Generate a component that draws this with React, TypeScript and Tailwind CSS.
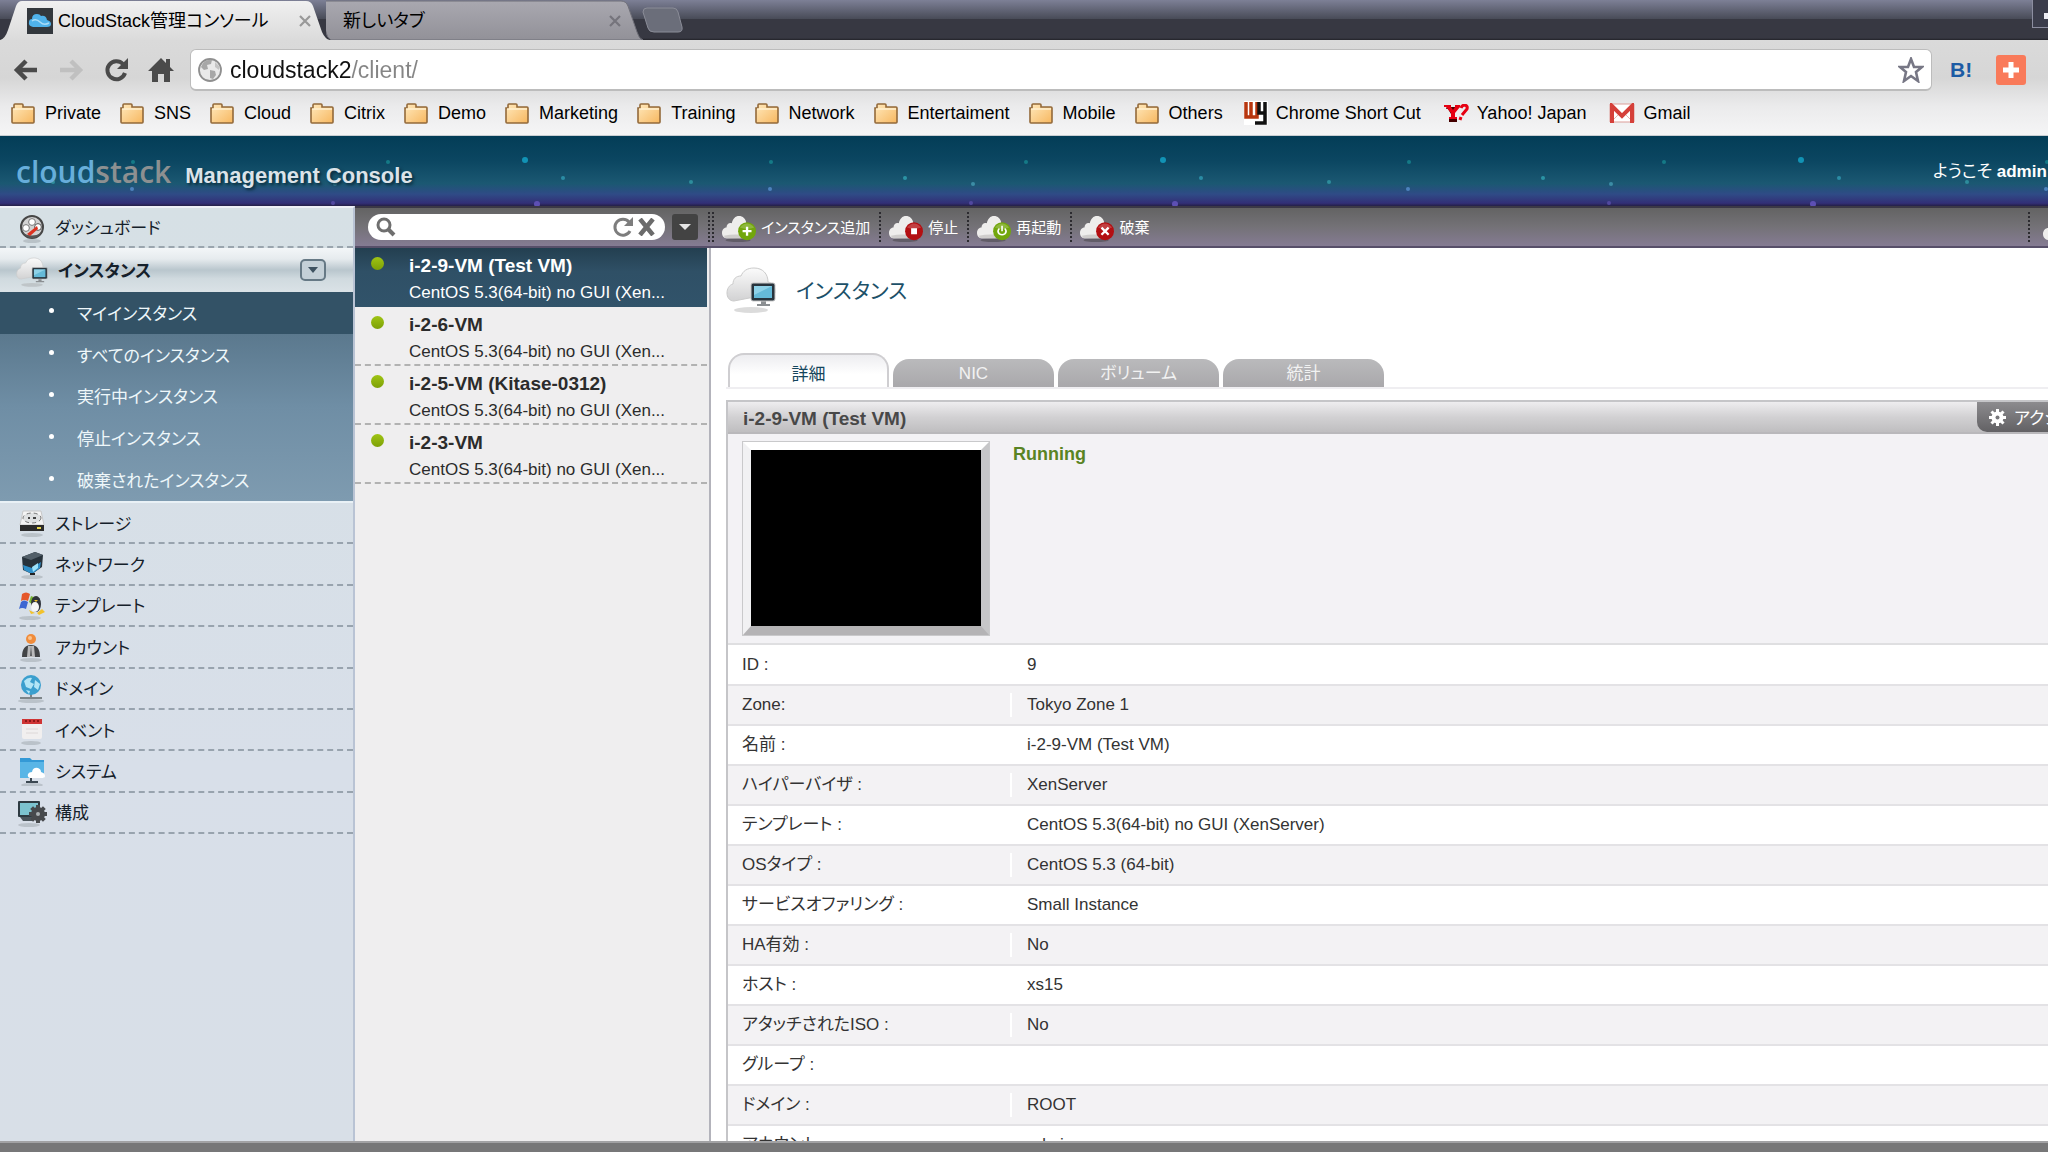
import { useState, type ReactNode } from "react";

const BOOKMARKS = [
  "Private", "SNS", "Cloud", "Citrix", "Demo", "Marketing", "Training",
  "Network", "Entertaiment", "Mobile", "Others",
];

const SUB_ITEMS = [
  "マイインスタンス",
  "すべてのインスタンス",
  "実行中インスタンス",
  "停止インスタンス",
  "破棄されたインスタンス",
];

const INSTANCES = [
  "i-2-9-VM (Test VM)",
  "i-2-6-VM",
  "i-2-5-VM (Kitase-0312)",
  "i-2-3-VM",
];

const TABS = ["詳細", "NIC", "ボリューム", "統計"];

const DETAILS = [
  { label: "ID :",                value: "9" },
  { label: "Zone:",               value: "Tokyo Zone 1" },
  { label: "名前 :",              value: "i-2-9-VM (Test VM)" },
  { label: "ハイパーバイザ :",    value: "XenServer" },
  { label: "テンプレート :",      value: "CentOS 5.3(64-bit) no GUI (XenServer)" },
  { label: "OSタイプ :",          value: "CentOS 5.3 (64-bit)" },
  { label: "サービスオファリング :", value: "Small Instance" },
  { label: "HA有効 :",            value: "No" },
  { label: "ホスト :",            value: "xs15" },
  { label: "アタッチされたISO :", value: "No" },
  { label: "グループ :",          value: "" },
  { label: "ドメイン :",          value: "ROOT" },
  { label: "アカウント :",        value: "admin" },
];

// x, y, radius, colour inside one 638px tile of the banner
const STARS: [number, number, number, string][] = [
  [525, 24, 3, "#1193b5"], [563, 42, 2, "#2a8ca5"], [53, 46, 2, "#2d8d9c"],
  [133, 26, 2, "#147a86"], [132, 53, 2, "#4d82bd"], [267, 42, 2, "#2a93a5"],
  [335, 48, 2, "#3b8da5"], [333, 67, 2, "#5148a0"], [388, 26, 2, "#147a86"],
  [537, 68, 3, "#5d4fb4"],
];

const CLOUD = "M6 26c-4 0-6-3-6-6 0-4 3-6 5-6 0-4 3-6 6-5 1-5 4-8 8-8s8 3 8 8c4 0 7 3 7 8 0 6-3 9-7 9z";

function FolderIcon() {
  return (
    <svg width="24" height="21" viewBox="0 0 24 21">
      <defs>
        <linearGradient id="folder" x1="0" y1="0" x2="1" y2="1">
          <stop offset="0" stopColor="#ffe9bd" />
          <stop offset="1" stopColor="#f7b75f" />
        </linearGradient>
      </defs>
      <path d="M1 19V5h2V2q0-1 1-1h7q1 0 1 1v2h10q1 0 1 1v14q0 1-1 1H2q-1 0-1-1z"
        fill="url(#folder)" stroke="#93693a" strokeWidth="1.6" />
      <path d="M2 6h20" stroke="#fff2d4" strokeWidth="1.4" />
    </svg>
  );
}

function Shadow({ cx = 12, cy = 25, rx = 11 }: { cx?: number; cy?: number; rx?: number }) {
  return <ellipse cx={cx} cy={cy} rx={rx} ry="2" fill="#8e979c" opacity=".4" />;
}

function InstanceIcon({ width, height }: { width: number; height: number }) {
  return (
    <svg width={width} height={height} viewBox="0 0 50 46">
      <defs>
        <linearGradient id="cloudBody" x1="0" y1="0" x2="0" y2="1">
          <stop offset="0" stopColor="#fbfbfb" />
          <stop offset="1" stopColor="#d2d2d3" />
        </linearGradient>
      </defs>
      <ellipse cx="25" cy="43" rx="17" ry="3" fill="#999" opacity=".35" />
      <path d="M8 34c-5 0-7-4-7-8s2-8 6-9c0-5 3-8 8-8 2-5 6-8 13-8 9 0 14 6 14 14 5 1 7 5 7 9v2z"
        fill="url(#cloudBody)" stroke="#cbcbcb" strokeWidth="1" />
      <path d="M35 33h5v4h4v2H31v-2h4z" fill="#8b8f92" />
      <rect x="25" y="16" width="24" height="18" rx="2" fill="#28343d" stroke="#c9c9c9" strokeWidth="1" />
      <rect x="28" y="19" width="18" height="12" fill="#65bad8" />
      <path d="M28 19h18l-18 9z" fill="#8fd2e8" />
    </svg>
  );
}

const DashboardIcon = (
  <svg width="28" height="28" viewBox="0 0 28 28">
    <Shadow cx={14} cy={26} rx={9} />
    <circle cx="14" cy="12" r="11" fill="#d2d2d2" stroke="#464646" strokeWidth="2" />
    <circle cx="8" cy="13" r="3.4" fill="#fff" stroke="#777" />
    <circle cx="14" cy="7" r="3.4" fill="#fff" stroke="#777" />
    <circle cx="20" cy="12" r="3.4" fill="#fff" stroke="#555" />
    <path d="M5 18q9 5 18 0-3 5-9 5t-9-5z" fill="#555" />
    <path d="M9 19l10-8 1 3-8 7z" fill="#dc3220" />
  </svg>
);

const StorageIcon = (
  <svg width="28" height="28" viewBox="0 0 28 28">
    <Shadow cx={14} />
    <path d="M5 1h18l3 14H2z" fill="#f4f4f4" stroke="#c8c8c8" />
    <ellipse cx="14" cy="8" rx="9" ry="5" fill="#dfe1e2" stroke="#777" strokeDasharray="4 3" />
    <path d="M10 8h2m3 0h3" stroke="#444" strokeWidth="2" />
    <rect x="2" y="15" width="24" height="6" fill="#2b2b2b" />
    <path d="M19 18h4" stroke="#e7d64e" strokeWidth="2" />
  </svg>
);

const NetworkIcon = (
  <svg width="28" height="28" viewBox="0 0 28 28">
    <Shadow cx={14} cy={26} />
    <path d="M4 6l13-5 8 3-1 12-10 7-9-4z" fill="#27323b" />
    <path d="M4 6l13-5 8 3-12 5z" fill="#525f69" />
    <path d="M5 14l9 3 9-6-1 6-8 6-8-4z" fill="#2f8fc9" />
    <path d="M14 16l6-4v5l-5 4z" fill="#9be2fb" />
    <path d="M12 22h5v2h-5z" fill="#222" />
  </svg>
);

const TemplateIcon = (
  <svg width="28" height="28" viewBox="0 0 28 28">
    <Shadow cx={12} cy={26} />
    <path d="M4 2q4-3 8 0l-2 7q-4-2-7 0z" fill="#e5572a" />
    <path d="M13 4q4 2 6 0l-2 7q-3 2-6-1z" fill="#77b532" />
    <path d="M3 10q3-3 7 0l-2 7q-4-2-7 0z" fill="#3d66d2" />
    <ellipse cx="18" cy="12" rx="5" ry="8" fill="#30343a" />
    <ellipse cx="17" cy="15" rx="4" ry="5" fill="#f6f6f6" />
    <path d="M11 18l6 3-4 1zM19 21l5-4 3 3-6 3z" fill="#f2c22b" />
    <path d="M16 8h4l-2 2z" fill="#f2c22b" />
  </svg>
);

const AccountIcon = (
  <svg width="28" height="28" viewBox="0 0 28 28">
    <Shadow cx={13} cy={26} />
    <circle cx="13" cy="5" r="5" fill="#f08c3b" />
    <circle cx="12" cy="4" r="2" fill="#fbc38c" />
    <path d="M4 23q0-12 9-12t9 12z" fill="#424446" />
    <path d="M10 12h6l1 11H9z" fill="#b9b9ba" />
    <path d="M13 12l1 10h-2z" fill="#56585a" />
  </svg>
);

const DomainIcon = (
  <svg width="28" height="28" viewBox="0 0 28 28">
    <Shadow cx={13} cy={26} rx={13} />
    <path d="M13 18v6M2 23h22" stroke="#7d8589" strokeWidth="2" />
    <circle cx="13" cy="10" r="10" fill="#3b9fce" />
    <path d="M6 6q4-4 8-3l-2 4 4 2-3 5-5-2zM17 5l5 4-2 6-4-3zM8 15l4 1-1 3z" fill="#b2e5f6" />
  </svg>
);

const EventIcon = (
  <svg width="28" height="28" viewBox="0 0 28 28">
    <Shadow cx={13} cy={26} rx={10} />
    <path d="M4 4h20v16q0 2-2 2H6q-2 0-2-2z" fill="#f1efef" />
    <path d="M4 2h20v5H4z" fill="#cf3434" />
    <path d="M8 3v2m4-2v2m4-2v2m4-2v2" stroke="#8d1717" strokeWidth="2" />
    <path d="M8 12h12M8 16h12" stroke="#ddd8d8" strokeWidth="1" />
  </svg>
);

const SystemIcon = (
  <svg width="28" height="28" viewBox="0 0 28 28">
    <Shadow cx={14} cy={27} />
    <path d="M2 0h10l2 2h12v18H2z" fill="#3499d6" />
    <path d="M2 4h24v16H2z" fill="#59b5e6" />
    <path d="M12 20q-3-1-2-4 1-2 4-2 1-5 6-4 3 1 3 4 4 1 4 4 0 2-3 2z" fill="#fff" />
    <path d="M13 20v4M8 24h12" stroke="#3c4852" strokeWidth="2" />
  </svg>
);

const ConfigIcon = (
  <svg width="30" height="28" viewBox="0 0 30 28">
    <Shadow cx={12} cy={26} />
    <rect x="1" y="2" width="22" height="16" rx="1" fill="#2d3a41" />
    <rect x="3" y="4" width="18" height="12" fill="#7cc3cf" />
    <path d="M3 18h12v4H6z" fill="#4a545a" />
    <g fill="#474a4d">
      <circle cx="21" cy="15" r="7" />
      <path d="M19 6h4v18h-4zM12 13h18v4H12z" />
      <path d="M19 6h4v18h-4z" transform="rotate(45 21 15)" />
      <path d="M19 6h4v18h-4z" transform="rotate(-45 21 15)" />
    </g>
    <circle cx="21" cy="15" r="2" fill="#a9b0b3" />
  </svg>
);

const MENU: { label: string; icon: ReactNode }[] = [
  { label: "ストレージ",   icon: StorageIcon },
  { label: "ネットワーク", icon: NetworkIcon },
  { label: "テンプレート", icon: TemplateIcon },
  { label: "アカウント",   icon: AccountIcon },
  { label: "ドメイン",     icon: DomainIcon },
  { label: "イベント",     icon: EventIcon },
  { label: "システム",     icon: SystemIcon },
  { label: "構成",         icon: ConfigIcon },
];

function CloudBadge({ color, children }: { color: string; children: ReactNode }) {
  return (
    <svg className="shrink-0" width="34" height="27" viewBox="0 0 38 30">
      <ellipse cx="18" cy="28" rx="14" ry="2" fill="#333" opacity=".4" />
      <path d={CLOUD} fill="#eeedec" />
      <path d="M2 23q10-2 20-1l-1 4H6q-3 0-4-3z" fill="#cfcdcc" />
      <circle cx="28" cy="18" r="10" fill={color} />
      <path d="M20 14q8-9 16 0-8 3-16 0z" fill="#fff" opacity=".2" />
      <g stroke="#fff" strokeWidth="2.6" fill="none">{children}</g>
    </svg>
  );
}

const ACTIONS = [
  { label: "インスタンス追加", color: "#72a60c", glyph: <path d="M28 13v10M23 18h10" /> },
  { label: "停止", color: "#b30f12", glyph: <path d="M26 16h4v4h-4z" fill="#fff" /> },
  { label: "再起動", color: "#72a60c", glyph: <path d="M28 12v6M25 15q-3 3 0 6 3 2 6 0 3-3 0-6" strokeWidth="1.8" /> },
  { label: "破棄", color: "#b30f12", glyph: <path d="M24 14l8 8M32 14l-8 8" /> },
];

function BrowserTabs() {
  return (
    <div className="relative flex h-10 shrink-0 items-stretch bg-[linear-gradient(#7d8096,#484b57_19px,#373842_19px,#373842_38px,#222228)]">
      <div className="relative z-10 flex w-[338px] items-center pb-[6px] pl-[27px] pr-[26px] pt-2">
        <svg className="absolute inset-0" width="338" height="40">
          <defs>
            <linearGradient id="tabOn" x1="0" y1="0" x2="0" y2="1">
              <stop offset="0" stopColor="#f0f0f0" />
              <stop offset="1" stopColor="#dbdbdb" />
            </linearGradient>
          </defs>
          <path d="M0 40q5-1 8-10L16 6q2-5 6-5h284q5 0 7 5l9 26q3 7 8 8z" fill="url(#tabOn)" />
        </svg>
        <svg className="relative" width="26" height="26" viewBox="0 0 26 26">
          <path d="M0 0h26v26H0z" fill="#33383d" />
          <path d="M6 19q-5-1-4-5 0-3 3-3 0-5 5-5 3 0 4 2 5-1 6 4 4 1 4 4 0 3-4 3z" fill="#4fb2ea" />
          <path d="M5 13q4-3 8 1t9 1" stroke="#a8dcf8" fill="none" strokeWidth="1.5" />
        </svg>
        <button className="relative ml-[5px] flex-1 whitespace-nowrap text-left text-[18px] leading-6 text-black">
          CloudStack管理コンソール
        </button>
        <button className="relative" aria-label="Close tab">
          <svg width="14" height="14"><path d="M2 2l10 10M12 2L2 12" stroke="#999" strokeWidth="2.2" /></svg>
        </button>
      </div>
      <div className="relative -ml-3 flex w-[322px] items-center pb-[6px] pl-[17px] pr-[26px] pt-2">
        <svg className="absolute inset-0" width="322" height="40">
          <defs>
            <linearGradient id="tabOff" x1="0" y1="0" x2="0" y2="1">
              <stop offset="0" stopColor="#a9a8b0" />
              <stop offset="1" stopColor="#929198" />
            </linearGradient>
          </defs>
          <path d="M-8 5q2-4 6-4h297q5 0 7 5l9 26q2 7 6 8H5q-4-2-5-8z" fill="url(#tabOff)" stroke="#6f6f78" />
        </svg>
        <button className="relative flex-1 whitespace-nowrap text-left text-[18px] leading-6 text-black">
          新しいタブ
        </button>
        <button className="relative" aria-label="Close tab">
          <svg width="14" height="14"><path d="M2 2l10 10M12 2L2 12" stroke="#75747c" strokeWidth="2.2" /></svg>
        </button>
      </div>
      <button className="ml-[-6px] self-center" aria-label="New tab">
        <svg width="42" height="26">
          <path d="M1 5q0-4 4-4h26q4 0 5 4l4 15q1 5-4 5H12q-5 0-6-4z" fill="#6b6e7a" stroke="#8b8d98" />
        </svg>
      </button>
      <button className="ml-auto flex h-7 w-4 items-center justify-end self-start border-b border-l border-[#8c8ea0] bg-[#3b3d4b]" aria-label="Minimize">
        <span className="mt-1 h-[6px] w-1 bg-[#ececf2]" />
      </button>
    </div>
  );
}

function AddressBar() {
  return (
    <div className="flex h-12 items-center pt-1 text-[#4c4c4c]">
      <div className="flex w-[190px] items-center justify-between pl-[13px] pr-[16px]">
        <button aria-label="Back">
          <svg width="26" height="26" viewBox="0 0 26 26">
            <path d="M24 13H5M13 4l-9 9 9 9" fill="none" stroke="#4a4a4a" strokeWidth="4.5" />
          </svg>
        </button>
        <button aria-label="Forward">
          <svg width="26" height="26" viewBox="0 0 26 26">
            <path d="M2 13h19M13 4l9 9-9 9" fill="none" stroke="#c0c0c0" strokeWidth="4.5" />
          </svg>
        </button>
        <button aria-label="Reload">
          <svg width="26" height="26" viewBox="0 0 26 26">
            <path d="M20 7a9 9 0 1 0 2 9" fill="none" stroke="#4a4a4a" strokeWidth="4" />
            <path d="M25 1v11H14z" fill="#4a4a4a" />
          </svg>
        </button>
        <button aria-label="Home">
          <svg width="26" height="26" viewBox="0 0 26 26">
            <path d="M13 1l5 5V2h4v8l4 4h-4v11h-6v-8h-6v8H4V14H0z" fill="#4a4a4a" />
          </svg>
        </button>
      </div>
      <div className="flex h-[42px] flex-1 items-center rounded-md border border-b-2 border-[#bcbcbc] bg-white pl-[7px] pr-[7px]">
        <svg width="24" height="24" viewBox="0 0 24 24">
          <circle cx="12" cy="12" r="11" fill="#e9e9e9" stroke="#8f8f8f" strokeWidth="1.8" />
          <path d="M5 5q4-4 9-3l-1 4-4 1 1 4-4 1-3-3zM12 12l5 1 1 4-3 4-3-1z" fill="#a7a7a7" />
          <path d="M17 4l4 4v4l-4-3z" fill="#c4c4c4" />
        </svg>
        <input aria-label="Address" defaultValue="cloudstack2/client/"
          className="ml-2 min-w-0 flex-1 bg-[linear-gradient(to_right,#111111_121px,#858585_121px)] bg-clip-text text-[23px] leading-8 text-transparent outline-none" />
        <button aria-label="Bookmark this page">
          <svg width="26" height="26" viewBox="0 0 26 26">
            <path d="M13 2l3 8h8l-6 5 2 9-7-5-7 5 2-9-6-5h8z" fill="#fff" stroke="#777785" strokeWidth="2.6" />
          </svg>
        </button>
      </div>
      <div className="flex w-[116px] items-center pl-[18px]">
        <button className="w-[26px] text-left text-[21px] font-bold leading-6 text-[#1c5ba4]">B!</button>
        <button className="ml-5" aria-label="Add">
          <svg width="30" height="30">
            <rect width="30" height="30" rx="3" fill="#f97a5a" />
            <path d="M15 7v16M7 15h16" stroke="#fff" strokeWidth="5" />
          </svg>
        </button>
      </div>
    </div>
  );
}

function BookmarkBar() {
  return (
    <nav className="flex h-[42px] items-center gap-[19px] whitespace-nowrap pl-[11px] text-[18px] leading-6 text-black">
      {BOOKMARKS.map((name) => (
        <a key={name} href="#" className="flex items-center gap-[10px]">
          <FolderIcon />
          {name}
        </a>
      ))}
      <a href="#" className="flex items-center gap-2 px-[2px]">
        <svg width="24" height="24">
          <path d="M0 0h24v24H0z" fill="#fff" />
          <path d="M2 1v15h11V1M7 1v15" stroke="#b8360f" strokeWidth="3.5" fill="none" />
          <path d="M15 1v11h6V1M21 10v12H11" stroke="#111" strokeWidth="3.5" fill="none" />
        </svg>
        Chrome Short Cut
      </a>
      <a href="#" className="flex items-center gap-2 px-[2px]">
        <svg width="25" height="18" viewBox="0 0 25 18">
          <path d="M3 3h10l-2 2-2 4h1v6h3v3H5v-3h2v-5L4 5H2z" fill="#400" />
          <path d="M0 1h7v2l2 3 2-3V1h5v2l-5 6v4h2v2H5v-2h2V9L2 3H0z" fill="#e60012" />
          <path d="M17 4q1-3 4-3 3 1 2 4l-5 6M17 13l-1 3" stroke="#e60012" strokeWidth="3" fill="none" />
        </svg>
        Yahoo! Japan
      </a>
      <a href="#" className="flex items-center gap-2 px-[2px]">
        <svg width="26" height="20" viewBox="0 0 26 20">
          <path d="M1 1h24v18H1z" fill="#fff" stroke="#dc9d99" />
          <path d="M3 18l8-8M23 18l-8-8" stroke="#e5b5b2" />
          <path d="M3 20V3l10 10L23 3v17" fill="none" stroke="#d5403a" strokeWidth="4" />
        </svg>
        Gmail
      </a>
    </nav>
  );
}

function Banner() {
  return (
    <header className="relative flex h-[71px] shrink-0 items-center overflow-hidden border-t border-[#c9ced2] bg-[linear-gradient(#033d57,#0b4661_35%,#1b5872_68%,#2f4b86_83%,#322f76_96%,#241f46)]">
      <svg className="absolute inset-0 h-full w-full">
        <pattern id="stars" width="638" height="71" patternUnits="userSpaceOnUse">
          {STARS.map(([x, y, r, c]) => (
            <circle key={`${x}-${y}`} cx={x} cy={y} r={r} fill={c} />
          ))}
        </pattern>
        <rect width="100%" height="100%" fill="url(#stars)" />
      </svg>
      <h1 className="relative flex items-baseline gap-[14px] whitespace-nowrap pl-4 pt-[2px]">
        <span className="font-['Open_Sans',sans-serif] text-[30px] font-semibold leading-10 text-[#8d9091]">
          <span className="text-[#67aedb]">cloud</span>stack
        </span>
        <span className="text-[22px] font-bold leading-8 text-[#dbe3e9] [text-shadow:2px_2px_3px_#0a2a3c]">
          Management Console
        </span>
      </h1>
      <p className="relative ml-auto w-[115px] whitespace-nowrap pt-[2px] text-[17px] leading-6 text-white">
        ようこそ <b>admin</b>
      </p>
    </header>
  );
}

function Sidebar() {
  const [current, setCurrent] = useState(SUB_ITEMS[0]);

  return (
    <nav className="flex w-[355px] shrink-0 flex-col border-r-2 border-t-2 border-r-[#b9c3d4] border-t-[#eef0f6] bg-[linear-gradient(#d6e0e5,#d8dfe9_60%,#d8dfe7)] text-[17px] leading-6 text-[#15202a]">
      <a href="#" className="flex h-10 items-center border-b-2 border-dashed border-[#9aa5ae] pt-1">
        <span className="flex w-[55px] justify-center pl-[8px]">{DashboardIcon}</span>
        ダッシュボード
      </a>
      <div className="flex h-[44px] items-center bg-[linear-gradient(#f3f6f8,#e6ebee_25%,#b9c6cd_50%,#d0dadf_70%,#dae2e6)] pr-[27px]">
        <span className="flex w-[58px] justify-center pl-[6px] pt-1"><InstanceIcon width={32} height={30} /></span>
        <a href="#" className="flex-1 pt-1 font-bold">インスタンス</a>
        <button className="flex h-[22px] w-[26px] items-center justify-center rounded-[5px] border-2 border-[#667985] bg-[#c4d0d7]" aria-label="Toggle instances">
          <svg width="12" height="8"><path d="M1 1h10L6 7z" fill="#3e5260" /></svg>
        </button>
      </div>
      <ul className="grid h-[209px] shrink-0 auto-rows-fr bg-[linear-gradient(#4f6c80,#6f8ea5_55%,#7e9bb0)] text-[#eef7fa]">
        {SUB_ITEMS.map((item) => (
          <li key={item} className={item === current ? "bg-[#335266]" : ""}>
            <button onClick={() => setCurrent(item)} className="flex h-full w-full items-center pl-[49px] pt-1 text-left">
              <span className="mb-2 mr-[23px] h-[5px] w-[5px] rounded-full bg-white" />
              {item}
            </button>
          </li>
        ))}
      </ul>
      <ul className="grid h-[333px] shrink-0 auto-rows-fr border-t-2 border-[#e9f1f6]">
        {MENU.map(({ label, icon }) => (
          <li key={label} className="border-b-2 border-dashed border-[#98a3ae]">
            <a href="#" className="flex h-full items-center pt-1">
              <span className="flex w-[55px] justify-center pb-[2px] pl-[8px]">{icon}</span>
              {label}
            </a>
          </li>
        ))}
      </ul>
    </nav>
  );
}

function Toolbar() {
  return (
    <div className="flex h-[42px] shrink-0 items-center overflow-hidden border-b-2 border-t-2 border-b-[#574f69] border-t-[#3b3846] bg-[linear-gradient(#636363,#747277_50%,#857b93)]">
      <div className="flex w-[353px] shrink-0 items-center pl-[13px]">
        <label className="flex h-[26px] w-[297px] items-center rounded-full bg-white pl-2 pr-[10px]">
          <svg width="20" height="20" viewBox="0 0 20 20">
            <circle cx="8" cy="8" r="6" fill="none" stroke="#6f6f6f" strokeWidth="3" />
            <path d="M12 12l6 6" stroke="#6f6f6f" strokeWidth="4" />
          </svg>
          <input type="text" aria-label="Search instances" className="mx-2 h-5 min-w-0 flex-1 text-[17px] outline-none" />
          <button aria-label="Refresh">
            <svg width="22" height="22" viewBox="0 0 22 22">
              <path d="M17 6a8 8 0 1 0 1 9" fill="none" stroke="#7d7d7d" strokeWidth="3" />
              <path d="M21 1v9h-9z" fill="#7d7d7d" />
            </svg>
          </button>
          <button className="ml-1" aria-label="Clear">
            <svg width="17" height="18"><path d="M2 1l13 16M15 1L2 17" stroke="#6b6b6b" strokeWidth="4.5" /></svg>
          </button>
        </label>
        <button className="ml-[7px] flex h-[26px] w-[26px] items-center justify-center rounded-[3px] bg-[#434343]" aria-label="Search options">
          <svg width="12" height="8"><path d="M0 1h12L6 7z" fill="#e5e5e5" /></svg>
        </button>
      </div>
      <span className="h-[30px] w-[6px] shrink-0 border-x-2 border-dotted border-[#2c2b30]" />
      {ACTIONS.map(({ label, color, glyph }, i) => (
        <button key={label}
          className={`flex h-[30px] items-center gap-[5px] whitespace-nowrap pl-2 pr-[9px] pt-[2px] text-[15px] leading-6 text-white ${i < 3 ? "border-r-2 border-dotted border-[#2c2b30]" : ""}`}>
          <CloudBadge color={color}>{glyph}</CloudBadge>
          {label}
        </button>
      ))}
      <button className="ml-auto h-[30px] w-5 overflow-hidden border-l-2 border-dotted border-[#2c2b30] pl-[13px]" aria-label="More">
        <svg width="34" height="27" viewBox="0 0 34 27"><path d={CLOUD} fill="#eeedec" /></svg>
      </button>
    </div>
  );
}

function InstanceList() {
  const [selected, setSelected] = useState(INSTANCES[0]);

  return (
    <ul className="w-[356px] shrink-0 border-r-2 border-[#b3b3bb] bg-[#efeeef] pr-[2px]">
      {INSTANCES.map((name) => {
        const on = name === selected;
        return (
          <li key={name}>
            <button onClick={() => setSelected(name)}
              className={`flex h-[59px] w-full items-start pl-4 text-left ${on ? "bg-[linear-gradient(#233f50,#2f5066_40%,#31536a)] text-white" : "border-b-2 border-dashed border-[#b2b2b2] text-[#2b2b2b]"}`}>
              <span className="mt-[9px] h-[13px] w-[13px] rounded-full bg-[linear-gradient(#9fc414,#7da007)]" />
              <span className="ml-[25px]">
                <b className="block pt-[6px] text-[19px] leading-6">{name}</b>
                <span className="block pt-[3px] text-[17px] leading-6">CentOS 5.3(64-bit) no GUI (Xen...</span>
              </span>
            </button>
          </li>
        );
      })}
    </ul>
  );
}

function Details() {
  const [tab, setTab] = useState(TABS[0]);

  return (
    <main className="min-w-0 flex-1 overflow-hidden bg-white pl-[15px]">
      <div className="flex h-[84px] items-center gap-5">
        <InstanceIcon width={50} height={46} />
        <h2 className="pt-[2px] text-[21px] leading-8 text-[#1c5068]">インスタンス</h2>
      </div>

      <div className="mt-5 flex h-[37px] items-end gap-1 border-b-2 border-[#efeef1] pl-[2px]" role="tablist">
        {TABS.map((label) => (
          <button key={label} role="tab" aria-selected={label === tab} onClick={() => setTab(label)}
            className={label === tab
              ? "h-[34px] w-[161px] rounded-t-[16px] border-2 border-b-0 border-[#cfced1] bg-[linear-gradient(#ededf0,#ffffff_60%)] pt-[7px] text-[17px] leading-6 text-[#14455c]"
              : "h-[28px] w-[161px] rounded-t-[16px] bg-[linear-gradient(#bababc,#a9a8ab)] pt-[2px] text-[17px] leading-6 text-[#f2f2f2]"}>
            {label}
          </button>
        ))}
      </div>

      <section className="mt-[11px] border-l-2 border-t-2 border-[#c5c5c8]">
        <div className="flex h-[32px] items-stretch border-b-2 border-[#b9b8bb] bg-[linear-gradient(#eeedef,#d2d1d3_50%,#bfbec0)]">
          <h3 className="flex-1 pl-[15px] pt-[5px] text-[19px] font-bold leading-6 text-[#484848]">i-2-9-VM (Test VM)</h3>
          <button className="flex w-[71px] items-center gap-2 overflow-hidden whitespace-nowrap rounded-bl-[10px] bg-[linear-gradient(#8c8b8e,#626164)] pl-3 text-[17px] leading-6 text-white">
            <svg className="shrink-0" width="17" height="17" viewBox="0 0 17 17">
              <g fill="#fff">
                <circle cx="8.5" cy="8.5" r="6" />
                <path d="M7 0h3v17H7zM0 7h17v3H0z" />
                <path d="M7 0h3v17H7z" transform="rotate(45 8.5 8.5)" />
                <path d="M7 0h3v17H7z" transform="rotate(-45 8.5 8.5)" />
              </g>
              <circle cx="8.5" cy="8.5" r="2" fill="#77767a" />
            </svg>
            <span className="pt-[3px]">アクション</span>
          </button>
        </div>
        <div className="flex h-[211px] items-start border-b-2 border-[#dfdfe1] bg-[#f3f2f5] pl-[15px] pt-2">
          <div className="border-x-8 border-b-[9px] border-t-8 border-l-[#f1f1f3] border-r-[#c6c6c8] border-b-[#b4b3b5] border-t-white outline-1 outline-[#c9c9cb]">
            <div className="h-[176px] w-[230px] bg-black" />
          </div>
          <b className="ml-6 text-[18px] leading-6 text-[#598423]">Running</b>
        </div>
        <table className="w-full border-collapse text-[17px] leading-6 text-[#333333]">
          <tbody>
            {DETAILS.map(({ label, value }) => (
              <tr key={label} className="h-10 border-b-2 border-[#e3e2e5] odd:bg-white even:bg-[#f3f2f4]">
                <th scope="row" className="w-[284px] p-0 pl-[14px] text-left font-normal">
                  <div className="border-r-2 border-white">{label}</div>
                </th>
                <td className="p-0 pl-[15px]">{value}</td>
              </tr>
            ))}
          </tbody>
        </table>
      </section>
    </main>
  );
}

export default function App() {
  return (
    <div className="flex h-screen flex-col overflow-hidden bg-white font-['Liberation_Sans','Noto_Sans_CJK_JP',sans-serif] [font-feature-settings:'palt']">
      <BrowserTabs />
      <div className="h-[95px] shrink-0 bg-[linear-gradient(#dadada,#d6d6d6_40%,#ebebec_70%,#f5f5f6)] pt-1">
        <AddressBar />
        <BookmarkBar />
      </div>
      <Banner />
      <div className="flex min-h-0 flex-1">
        <Sidebar />
        <div className="flex min-w-0 flex-1 flex-col">
          <Toolbar />
          <div className="flex min-h-0 flex-1">
            <InstanceList />
            <Details />
          </div>
        </div>
      </div>
      <footer className="h-[11px] shrink-0 border-t-2 border-[#a2a2a4] bg-[#777778]" />
    </div>
  );
}
